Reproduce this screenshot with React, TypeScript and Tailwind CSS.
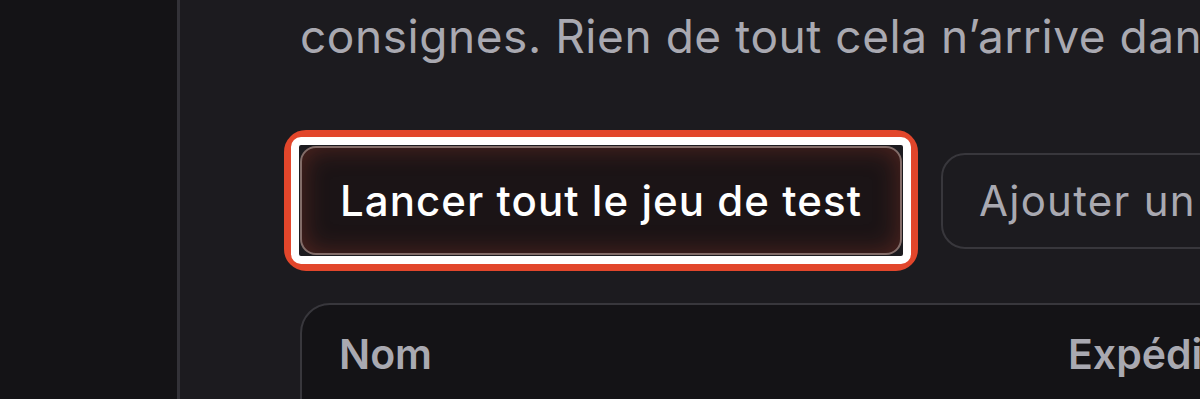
import React from "react";

export default function App() {
  return (
    <div
      className="flex h-[399px] w-[1200px] overflow-hidden bg-[#1c1b1f]"
      style={{ fontFamily: "Inter, 'Noto Sans', sans-serif" }}
    >
      <aside className="h-full w-[180px] shrink-0 border-r-[3px] border-[#333238] bg-[#141316]" />
      <main className="flex min-w-0 flex-1 flex-col pl-[120px]">
        <p className="mt-[3px] whitespace-nowrap text-[46px] leading-[66px] tracking-[0.012em] text-[#a9a9b1]">
          consignes. Rien de tout cela n’arrive dans votre boîte de réception réelle.
        </p>
        <div className="mt-[77px] flex items-center gap-[39px] whitespace-nowrap">
          <div className="relative shrink-0">
            <button className="flex h-[109px] w-[602px] items-center rounded-[16px] border-2 border-[#caa8a2]/60 bg-[#1b1416] pl-[38px] text-[42px] font-medium tracking-[0.025em] text-white shadow-[inset_0_0_26px_rgba(190,70,50,0.35)]">
              Lancer tout le jeu de test
            </button>
            <div className="pointer-events-none absolute -inset-[16px] rounded-[22px] border-[7px] border-[#e2462b]">
              <div className="h-full w-full rounded-[10px] border-[8px] border-white" />
            </div>
          </div>
          <button className="flex h-[96px] shrink-0 items-center rounded-[24px] border-2 border-[#38373c] bg-[#1c1b1f] px-[36px] text-[42px] font-normal tracking-[0.03em] text-[#a9a9b1]">
            Ajouter un scénario de test
          </button>
        </div>
        <div className="mt-[48px] flex h-[200px] w-[1100px] shrink-0 rounded-[30px] border-2 border-[#38373c] bg-[#141316] pl-[37px] pt-[18px]">
          <div className="flex w-full text-[41px] font-semibold leading-[63px] text-[#a9a9b1]">
            <span className="w-[729px]">Nom</span>
            <span>Expéditeur</span>
          </div>
        </div>
      </main>
    </div>
  );
}
